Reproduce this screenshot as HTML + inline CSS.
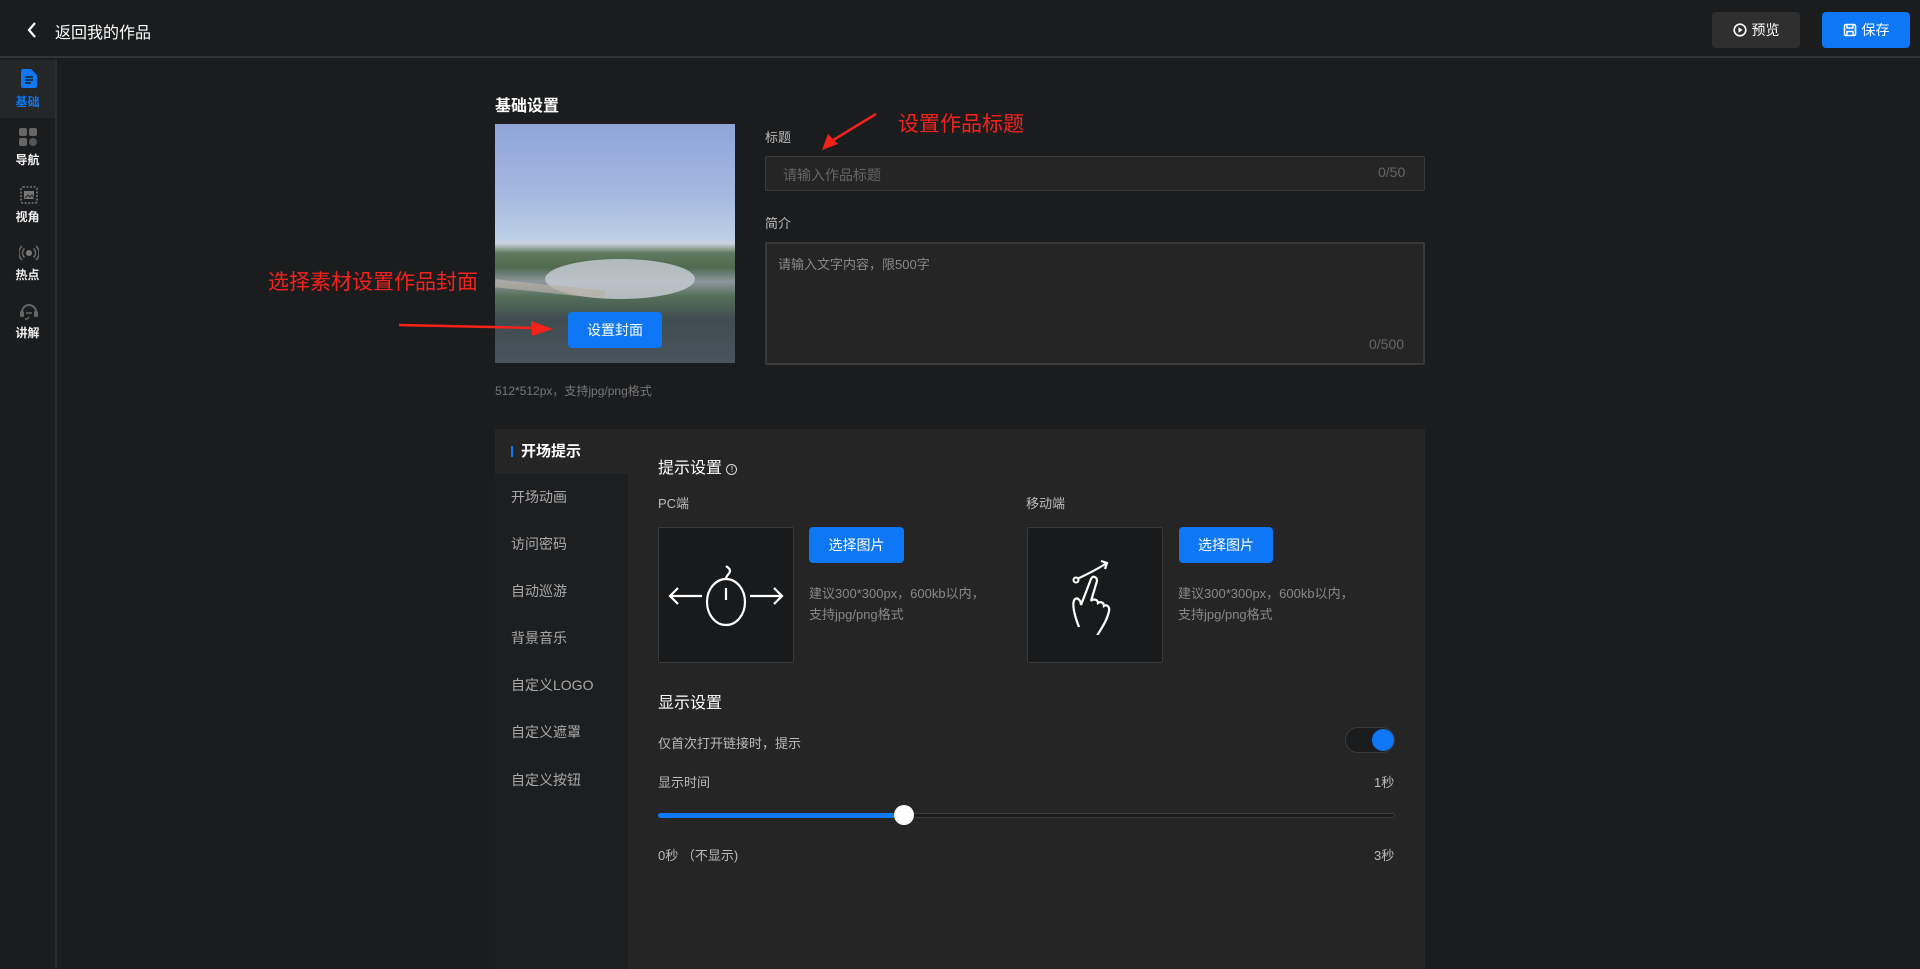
<!DOCTYPE html>
<html><head><meta charset="utf-8"><style>
*{margin:0;padding:0;box-sizing:border-box}
body{width:1920px;height:969px;background:#1b1c1e;font-family:"Liberation Sans","Noto Sans CJK SC",sans-serif;color:#ddd;position:relative;overflow:hidden}
.a{position:absolute}
.top{left:0;top:0;width:1920px;height:58px;background:#1b1c1e;border-bottom:2px solid #333}
.btn{position:absolute;border-radius:4px;color:#fff;font-size:14px;display:flex;align-items:center;justify-content:center;gap:5px}
.side{left:0;top:60px;width:57px;height:909px;border-right:2px solid #2c2d30}
.si{position:absolute;left:0;width:55px;text-align:center;font-size:12px;color:#eee;font-weight:bold}
.blue{background:#0d77f5}
.lbl{font-size:13px;color:#bbb}
.nav{font-size:14px;color:#aaa;left:511px}
.hint{font-size:13px;color:#888;line-height:21px}
</style></head><body>
<div class="a top"></div>
<svg class="a" style="left:26px;top:21px" width="12" height="18" viewBox="0 0 12 18"><path d="M9 2L3 9l6 7" stroke="#fff" stroke-width="2.2" fill="none"/></svg>
<div class="a" style="left:55px;top:19px;font-size:16px;color:#fff">返回我的作品</div>
<div class="btn" style="left:1712px;top:12px;width:88px;height:36px;background:#2f2f2f"><svg width="14" height="14" viewBox="0 0 14 14"><circle cx="7" cy="7" r="5.8" stroke="#fff" stroke-width="1.6" fill="none"/><path d="M5.5 4.3v5.4L9.6 7z" fill="#fff"/></svg>预览</div>
<div class="btn blue" style="left:1822px;top:12px;width:88px;height:36px"><svg width="14" height="14" viewBox="0 0 14 14"><rect x="1.5" y="1.5" width="11" height="11" rx="1.5" stroke="#fff" stroke-width="1.6" fill="none"/><path d="M4 1.5v3.5h6V1.5M4 12.5V8.5h6v4" stroke="#fff" stroke-width="1.4" fill="none"/></svg>保存</div>

<div class="a side"></div>
<div class="a" style="left:0;top:60px;width:55px;height:58px;background:#252628"></div>
<svg class="a" style="left:21px;top:69px" width="16" height="19" viewBox="0 0 16 19"><path d="M0 2a2 2 0 012-2h8l6 6v11a2 2 0 01-2 2H2a2 2 0 01-2-2z" fill="#0d77f5"/><path d="M4 8h8M4 11h8M4 14h6" stroke="#1b1c1e" stroke-width="1.5"/></svg>
<div class="si" style="top:93px;color:#0d77f5">基础</div>
<svg class="a" style="left:19px;top:128px" width="19" height="18" viewBox="0 0 19 18"><rect x="0" y="0" width="8" height="8" rx="2" fill="#666"/><rect x="10" y="0" width="8" height="8" rx="2" fill="#666"/><rect x="0" y="10" width="8" height="8" rx="2" fill="#666"/><circle cx="14" cy="14" r="4" fill="#555"/></svg>
<div class="si" style="top:151px">导航</div>
<svg class="a" style="left:20px;top:186px" width="18" height="18" viewBox="0 0 18 18"><rect x="1" y="1" width="16" height="16" rx="2" stroke="#777" stroke-width="1.6" stroke-dasharray="2 1.5" fill="none"/><rect x="4" y="5" width="10" height="8" fill="#777"/><path d="M5 12l3-3 2 2 2-2 2 3" stroke="#222" fill="none"/></svg>
<div class="si" style="top:208px">视角</div>
<svg class="a" style="left:19px;top:244px" width="20" height="18" viewBox="0 0 20 18"><circle cx="10" cy="9" r="3" fill="#777"/><path d="M5.5 4.5a6 6 0 000 9M14.5 4.5a6 6 0 010 9M3 2a9.5 9.5 0 000 14M17 2a9.5 9.5 0 010 14" stroke="#666" stroke-width="1.6" fill="none"/></svg>
<div class="si" style="top:266px">热点</div>
<svg class="a" style="left:19px;top:302px" width="20" height="18" viewBox="0 0 20 18"><path d="M3 10a7 7 0 0114 0" stroke="#666" stroke-width="2" fill="none"/><rect x="1" y="9" width="4" height="6" rx="1.5" fill="#666"/><rect x="15" y="9" width="4" height="6" rx="1.5" fill="#666"/><path d="M7 11h6M10 15a4 4 0 01-4 2" stroke="#666" stroke-width="1.5" fill="none"/></svg>
<div class="si" style="top:324px">讲解</div>

<div class="a" style="left:495px;top:92px;font-size:16px;font-weight:bold;color:#fff">基础设置</div>
<div class="a" style="left:495px;top:124px;width:240px;height:239px;background:linear-gradient(180deg,#8fa5d9 0%,#a5b9e0 30%,#bccfe7 48%,#c9d4df 50%,#5f7a60 54%,#4f6a4f 60%,#8d969e 66%,#55705a 72%,#3f4c50 82%,#4a545d 100%)"></div>
<div class="a" style="left:545px;top:259px;width:150px;height:40px;border-radius:50%;background:#c4cad0;opacity:.85"></div>
<div class="a" style="left:495px;top:285px;width:110px;height:8px;background:#b8b0a8;transform:rotate(6deg);opacity:.7"></div>
<div class="btn blue" style="left:568px;top:312px;width:94px;height:36px;font-size:14px">设置封面</div>
<div class="a" style="left:495px;top:382px;font-size:12px;color:#777">512*512px，支持jpg/png格式</div>

<div class="a lbl" style="left:765px;top:127px">标题</div>
<div class="a" style="left:765px;top:156px;width:660px;height:35px;background:#252525;border:1px solid #3a3a3a;border-radius:2px"></div>
<div class="a" style="left:783px;top:165px;font-size:14px;color:#666">请输入作品标题</div>
<div class="a" style="left:1378px;top:164px;font-size:14px;color:#666">0/50</div>
<div class="a lbl" style="left:765px;top:213px">简介</div>
<div class="a" style="left:765px;top:242px;width:660px;height:123px;background:#252525;border:2px solid #3a3a3a;border-radius:2px"></div>
<div class="a" style="left:778px;top:254px;font-size:13px;color:#888">请输入文字内容，限500字</div>
<div class="a" style="left:1369px;top:336px;font-size:14px;color:#666">0/500</div>

<div class="a" style="left:898px;top:108px;font-size:21px;color:#f5221b">设置作品标题</div>
<svg class="a" style="left:810px;top:108px" width="80" height="50"><path d="M66 6L20 34" stroke="#f5221b" stroke-width="2.5"/><path d="M12 42L18 26L28 36z" fill="#f5221b"/></svg>
<div class="a" style="left:268px;top:266px;font-size:21px;color:#f5221b">选择素材设置作品封面</div>
<svg class="a" style="left:395px;top:316px" width="165" height="20"><path d="M4 9L140 12" stroke="#f5221b" stroke-width="2.5"/><path d="M158 13L136 5L137 20z" fill="#f5221b"/></svg>

<div class="a" style="left:495px;top:429px;width:930px;height:540px;background:#252525"></div>
<div class="a" style="left:495px;top:429px;width:133px;height:540px;background:#1d1e20"></div>
<div class="a" style="left:495px;top:429px;width:133px;height:45px;background:#252525"></div>
<div class="a" style="left:511px;top:446px;width:2px;height:11px;background:#0d77f5"></div>
<div class="a" style="left:521px;top:440px;font-size:15px;font-weight:bold;color:#fff">开场提示</div>
<div class="a nav" style="top:487px">开场动画</div>
<div class="a nav" style="top:534px">访问密码</div>
<div class="a nav" style="top:581px">自动巡游</div>
<div class="a nav" style="top:628px">背景音乐</div>
<div class="a nav" style="top:675px">自定义LOGO</div>
<div class="a nav" style="top:722px">自定义遮罩</div>
<div class="a nav" style="top:770px">自定义按钮</div>

<div class="a" style="left:658px;top:454px;font-size:16px;color:#fff">提示设置 <span style="display:inline-block;width:11px;height:11px;border:1.3px solid #ddd;border-radius:50%;font-size:8px;line-height:9px;text-align:center;vertical-align:1px">!</span></div>
<div class="a lbl" style="left:658px;top:493px">PC端</div>
<div class="a lbl" style="left:1026px;top:493px">移动端</div>
<div class="a" style="left:658px;top:527px;width:136px;height:136px;background:#181a1b;border:1px solid #3a3a3a;border-radius:2px"></div>
<svg class="a" style="left:666px;top:560px" width="120" height="80" viewBox="0 0 120 80"><ellipse cx="60" cy="42" rx="19" ry="23" stroke="#fff" stroke-width="2.2" fill="none"/><path d="M60 28v12M60 19c0-4 4-5 4-8s-3-4-4-5" stroke="#fff" stroke-width="2.2" fill="none"/><path d="M36 36H4M12 28L4 36l8 8M84 36h32M108 28l8 8-8 8" stroke="#fff" stroke-width="2.2" fill="none"/></svg>
<div class="btn blue" style="left:809px;top:527px;width:95px;height:36px;font-size:14px">选择图片</div>
<div class="a hint" style="left:809px;top:583px">建议300*300px，600kb以内，<br>支持jpg/png格式</div>
<div class="a" style="left:1027px;top:527px;width:136px;height:136px;background:#181a1b;border:1px solid #3a3a3a;border-radius:2px"></div>
<svg class="a" style="left:1065px;top:555px" width="60" height="80" viewBox="0 0 60 80"><path d="M12 24c4-2 14-6 30-16M36 6l6 2-2 6" stroke="#fff" stroke-width="2.2" fill="none"/><circle cx="11" cy="25" r="2.5" stroke="#fff" stroke-width="2" fill="none"/><path d="M14 72c-4-10-8-24-4-28 3-2 6 2 6 6l10-26c2-4 6-2 6 2l-6 20c3-3 7-1 7 2 3-2 6 0 6 3 3-2 6 1 5 5-2 10-8 18-14 28" stroke="#fff" stroke-width="2.2" fill="none"/></svg>
<div class="btn blue" style="left:1179px;top:527px;width:94px;height:36px;font-size:14px">选择图片</div>
<div class="a hint" style="left:1178px;top:583px">建议300*300px，600kb以内，<br>支持jpg/png格式</div>

<div class="a" style="left:658px;top:689px;font-size:16px;color:#fff">显示设置</div>
<div class="a lbl" style="left:658px;top:733px">仅首次打开链接时，提示</div>
<div class="a" style="left:1345px;top:727px;width:50px;height:26px;border-radius:13px;background:#1b1c1e;border:1px solid #3a3a3a"></div>
<div class="a" style="left:1372px;top:729px;width:22px;height:22px;border-radius:50%;background:#0d77f5"></div>
<div class="a lbl" style="left:658px;top:772px">显示时间</div>
<div class="a lbl" style="left:1374px;top:772px">1秒</div>
<div class="a" style="left:658px;top:813px;width:737px;height:5px;border-radius:3px;background:#1b1c1e;border:1px solid #3a3a3a"></div>
<div class="a" style="left:658px;top:813px;width:246px;height:5px;border-radius:3px;background:#0d77f5"></div>
<div class="a" style="left:894px;top:805px;width:20px;height:20px;border-radius:50%;background:#fff"></div>
<div class="a lbl" style="left:658px;top:845px">0秒 （不显示)</div>
<div class="a lbl" style="left:1374px;top:845px">3秒</div>
</body></html>
